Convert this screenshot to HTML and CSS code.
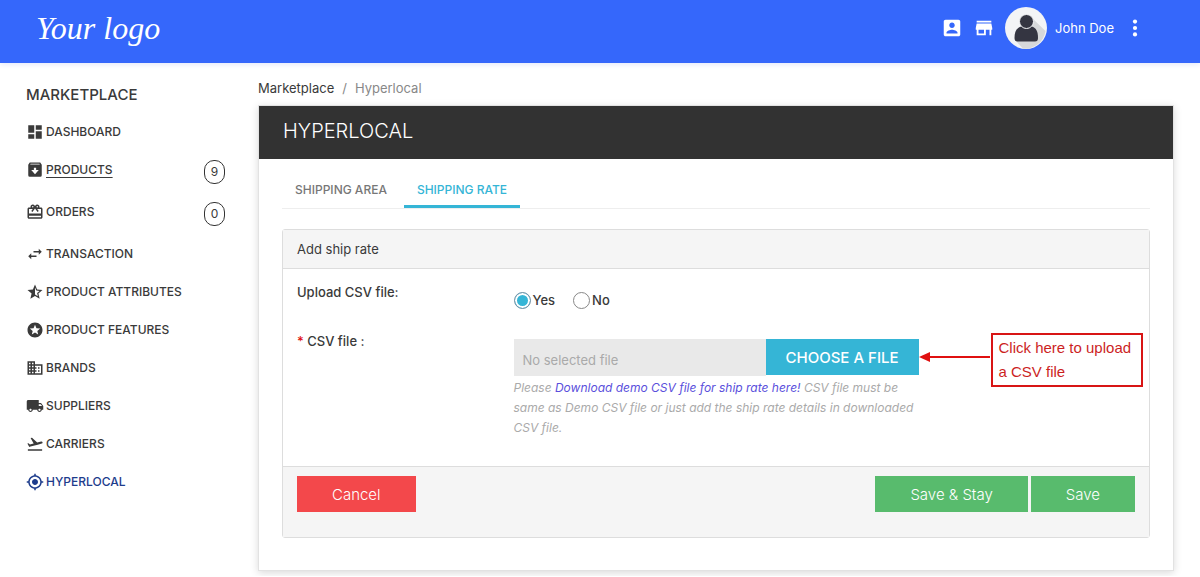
FILE: index.html
```html
<!DOCTYPE html>
<html lang="en">

<head>
  <meta charset="UTF-8">
  <meta name="viewport" content="width=device-width, initial-scale=1.0">
  <title>Hyperlocal - Marketplace</title>
  <link rel="stylesheet" href="styles.css">
</head>

<body>
  <header class="header">
    <a class="logo" href="#">Your logo</a>
    <nav class="header-nav">
      <a class="header-link" href="#" aria-label="Profile">
        <svg class="header-icon" viewBox="0 0 24 24"><path d="M3 5v14c0 1.100.89 2 2 2h14c1.100 0 2-.9 2-2V5c0-1.100-.9-2-2-2H5c-1.110 0-2 .9-2 2zm12 4c0 1.660-1.340 3-3 3s-3-1.340-3-3 1.340-3 3-3 3 1.340 3 3zm-9 8c0-2 4-3.100 6-3.100s6 1.100 6 3.100v1H6v-1z"/></svg>
      </a>
      <a class="header-link" href="#" aria-label="Shop">
        <svg class="header-icon" viewBox="0 0 24 24"><path d="M20 4H4v2h16V4zm1 10v-2l-1-5H4l-1 5v2h1v6h10v-6h4v6h2v-6h1zm-9 4H6v-4h6v4z"/></svg>
      </a>
      <a class="user" href="#">
        <svg class="avatar" viewBox="0 0 42 42">
          <circle cx="21" cy="21" r="21" fill="#f3f4f6"/>
          <path d="M26 10L40.500 24A21 21 0 0 1 18 41.700L10 33z" fill="#d6d8da"/>
          <path d="M9.500 31c0-6 2-10.500 7-11.500h10c5 1 6.500 5.500 6.500 11.500 0 2.500-1 3.500-3 3.500H12.500c-2 0-3-1-3-3.500z" fill="#343541"/>
          <circle cx="21.500" cy="14.500" r="7" fill="#343541" stroke="#f3f4f6"/>
        </svg>
        <span>John Doe</span>
      </a>
      <button class="menu-button" type="button" aria-label="More">
        <svg class="header-icon" viewBox="0 0 24 24"><circle cx="12" cy="5" r="2.300"/><circle cx="12" cy="12" r="2.300"/><circle cx="12" cy="19" r="2.300"/></svg>
      </button>
    </nav>
  </header>

  <div class="page">
    <aside class="sidebar">
      <h2 class="sidebar-title">MARKETPLACE</h2>
      <nav>
        <a class="menu-item" href="#">
          <svg class="icon" viewBox="0 0 24 24"><path d="M3 13h8V3H3v10zm0 8h8v-6H3v6zm10 0h8V11h-8v10zm0-18v6h8V3h-8z"/></svg>
          <span class="menu-text">DASHBOARD</span>
        </a>
        <a class="menu-item hovered" href="#">
          <svg class="icon" viewBox="0 0 24 24"><path fill-rule="evenodd" d="M5 2h14l2 3v14a2 2 0 0 1-2 2H5a2 2 0 0 1-2-2V5zM5.500 4.500h13l-.7-1H6.200zM10.500 9v3H7l5 5.500 5-5.500h-3.500V9z"/></svg>
          <span class="menu-text">PRODUCTS</span>
          <span class="badge">9</span>
        </a>
        <a class="menu-item" href="#">
          <svg class="icon" viewBox="0 0 24 24"><path d="M20 6h-2.180c.11-.31.18-.65.18-1 0-1.660-1.340-3-3-3-1.050 0-1.960.54-2.500 1.350l-.5.670-.5-.68C10.960 2.540 10.050 2 9 2 7.340 2 6 3.340 6 5c0 .35.070.69.180 1H4c-1.110 0-1.990.89-1.990 2L2 19c0 1.110.89 2 2 2h16c1.110 0 2-.89 2-2V8c0-1.110-.89-2-2-2zm-5-2c.55 0 1 .45 1 1s-.45 1-1 1-1-.45-1-1 .45-1 1-1zM9 4c.55 0 1 .45 1 1s-.45 1-1 1-1-.45-1-1 .45-1 1-1zm11 15H4v-2h16v2zm0-5H4V8h5.080L7 10.830 8.620 12 11 8.760l1-1.360 1 1.360L15.380 12 17 10.830 14.920 8H20v6z"/></svg>
          <span class="menu-text">ORDERS</span>
          <span class="badge">0</span>
        </a>
        <a class="menu-item" href="#">
          <svg class="icon" viewBox="0 0 24 24"><path d="M6.990 11L3 15l3.990 4v-3H14v-2H6.990v-3zM21 9l-3.990-4v3H10v2h7.010v3L21 9z"/></svg>
          <span class="menu-text">TRANSACTION</span>
        </a>
        <a class="menu-item" href="#">
          <svg class="icon" viewBox="0 0 24 24"><path d="M22 9.240l-7.190-.62L12 2 9.190 8.630 2 9.240l5.460 4.730L5.820 21 12 17.270 18.180 21l-1.630-7.030L22 9.240zM12 15.400V6.100l1.710 4.040 4.380.38-3.320 2.880 1 4.280L12 15.400z"/></svg>
          <span class="menu-text">PRODUCT ATTRIBUTES</span>
        </a>
        <a class="menu-item" href="#">
          <svg class="icon" viewBox="0 0 24 24"><path d="M11.990 2C6.470 2 2 6.480 2 12s4.470 10 9.990 10C17.520 22 22 17.520 22 12S17.520 2 11.990 2zm4.240 16L12 15.450 7.770 18l1.120-4.810-3.730-3.230 4.920-.42L12 5l1.920 4.530 4.920.42-3.730 3.230L16.230 18z"/></svg>
          <span class="menu-text">PRODUCT FEATURES</span>
        </a>
        <a class="menu-item" href="#">
          <svg class="icon" viewBox="0 0 24 24"><path d="M12 7V3H2v18h20V7H12zM6 19H4v-2h2v2zm0-4H4v-2h2v2zm0-4H4V9h2v2zm0-4H4V5h2v2zm4 12H8v-2h2v2zm0-4H8v-2h2v2zm0-4H8V9h2v2zm0-4H8V5h2v2zm10 12h-8v-2h2v-2h-2v-2h2v-2h-2V9h8v10zm-2-8h-2v2h2v-2zm0 4h-2v2h2v-2z"/></svg>
          <span class="menu-text">BRANDS</span>
        </a>
        <a class="menu-item" href="#">
          <svg class="icon" viewBox="0 0 24 24"><path d="M20 8h-3V4H3c-1.100 0-2 .9-2 2v11h2c0 1.660 1.340 3 3 3s3-1.340 3-3h6c0 1.660 1.340 3 3 3s3-1.340 3-3h2v-5l-3-4zM6 18.500c-.83 0-1.500-.67-1.500-1.500s.67-1.500 1.500-1.500 1.500.67 1.500 1.500-.67 1.500-1.500 1.500zm13.500-9l1.960 2.500H17V9.500h2.500zm-1.500 9c-.83 0-1.500-.67-1.500-1.500s.67-1.500 1.500-1.500 1.500.67 1.500 1.500-.67 1.500-1.500 1.500z"/></svg>
          <span class="menu-text">SUPPLIERS</span>
        </a>
        <a class="menu-item" href="#">
          <svg class="icon" viewBox="0 0 24 24"><path d="M2.500 19h19v2h-19zm19.570-9.360c-.21-.8-1.040-1.280-1.840-1.060L14.920 10l-6.900-6.430-1.930.51 4.140 7.170-4.970 1.330-1.970-1.540-1.450.39 1.820 3.160.77 1.330 1.600-.43 5.310-1.420 4.350-1.160L21 11.490c.81-.23 1.280-1.050 1.070-1.850z"/></svg>
          <span class="menu-text">CARRIERS</span>
        </a>
        <a class="menu-item active" href="#">
          <svg class="icon" viewBox="0 0 24 24"><path d="M12 8c-2.210 0-4 1.790-4 4s1.790 4 4 4 4-1.790 4-4-1.790-4-4-4zm8.940 3c-.46-4.170-3.770-7.480-7.940-7.940V1h-2v2.060C6.830 3.520 3.520 6.830 3.060 11H1v2h2.060c.46 4.170 3.770 7.480 7.940 7.940V23h2v-2.060c4.170-.46 7.480-3.770 7.940-7.940H23v-2h-2.060zM12 19c-3.870 0-7-3.130-7-7s3.130-7 7-7 7 3.130 7 7-3.130 7-7 7z"/></svg>
          <span class="menu-text">HYPERLOCAL</span>
        </a>
      </nav>
    </aside>

    <main class="content">
      <nav class="breadcrumb">
        <a href="#">Marketplace</a>
        <span>/</span>
        <span>Hyperlocal</span>
      </nav>

      <section class="card">
        <h1 class="card-title">HYPERLOCAL</h1>
        <div class="card-content">
          <nav class="tabs">
            <a class="tab" href="#">SHIPPING AREA</a>
            <a class="tab selected" href="#">SHIPPING RATE</a>
          </nav>

          <form class="panel">
            <h2 class="panel-title">Add ship rate</h2>
            <div class="panel-body">
              <div class="form-row" role="radiogroup" aria-labelledby="upload-label">
                <span class="form-label" id="upload-label">Upload CSV file:</span>
                <div class="field radios">
                  <label class="radio-label"><input class="radio" type="radio" name="upload" value="1" checked>Yes</label>
                  <label class="radio-label"><input class="radio" type="radio" name="upload" value="0">No</label>
                </div>
              </div>
              <div class="form-row">
                <label class="form-label" for="csv-file"><span class="required">*</span> CSV file :</label>
                <div class="field">
                  <div class="file-group">
                    <input class="file-name" type="text" id="csv-file" placeholder="No selected file" readonly>
                    <button class="file-button" type="button">CHOOSE A FILE</button>
                    <div class="callout">
                      <svg class="arrow" viewBox="0 0 72 12"><path d="M8 6h63" stroke="#e01010" stroke-width="2"/><path d="M0 6l11-5v10z" fill="#e01010"/></svg>
                      <p class="callout-text">Click here to upload a CSV file</p>
                    </div>
                  </div>
                  <p class="help">Please <a href="#">Download demo CSV file for ship rate here!</a> CSV file must be same as Demo CSV file or just add the ship rate details in downloaded CSV file.</p>
                </div>
              </div>
            </div>
            <div class="panel-footer">
              <button class="button cancel" type="button">Cancel</button>
              <div class="save-buttons">
                <button class="button save" type="submit">Save &amp; Stay</button>
                <button class="button save" type="submit">Save</button>
              </div>
            </div>
          </form>
        </div>
      </section>
    </main>
  </div>
</body>

</html>
```
FILE: styles.css
```css
* {
  box-sizing: border-box;
}

body {
  margin: 0;
  background: #fff;
  color: #3a3a3a;
  font-family: Inter, "Noto Sans", sans-serif;
  font-size: 13px;
  line-height: 20px;
}

a {
  color: inherit;
  text-decoration: none;
}

h1,
h2,
p {
  margin: 0;
}

button,
input {
  font-family: inherit;
}

/* Header */
.header {
  display: flex;
  align-items: center;
  justify-content: space-between;
  height: 63px;
  padding: 0 54px 8px 36px;
  background: #3567fb;
  color: #fff;
  box-shadow: 0 2px 5px #e6ebfb;
}

.logo {
  font-family: "Liberation Serif", serif;
  font-size: 32px;
  font-style: italic;
  line-height: 48px;
}

.header-nav {
  display: flex;
  align-items: center;
  gap: 10px;
}

.header-link,
.menu-button {
  display: flex;
}

.header-icon {
  width: 22px;
  height: 22px;
  fill: #fff;
}

.user {
  display: flex;
  align-items: center;
  gap: 8px;
}

.avatar {
  width: 42px;
  height: 42px;
}

.menu-button {
  padding: 0;
  border: none;
  background: none;
  cursor: pointer;
}

/* Layout */
.page {
  display: flex;
  padding: 0 26px 5px;
}

.sidebar {
  flex: 0 0 232px;
  padding: 21px 33px 0 0;
}

.content {
  flex: 1;
  min-width: 0;
  padding-top: 15px;
}

/* Sidebar */
.sidebar-title {
  margin-bottom: 7px;
  font-size: 15px;
  font-weight: 500;
  line-height: 22px;
}

.menu-item {
  display: flex;
  align-items: flex-start;
  gap: 2px;
  padding: 9px 0;
  font-size: 12px;
  font-weight: 500;
}

.icon {
  width: 18px;
  height: 18px;
  margin-top: 1px;
  fill: currentColor;
}

.hovered .menu-text {
  text-decoration: underline;
  text-underline-offset: 3px;
}

.active {
  color: #1d3c8c;
}

.badge {
  width: 21px;
  height: 24px;
  margin-left: auto;
  border: 1px solid #333;
  border-radius: 10px;
  font-weight: 400;
  line-height: 22px;
  text-align: center;
}

/* Main card */
.breadcrumb {
  display: flex;
  gap: 8px;
  margin-bottom: 7px;
  color: #888;
}

.breadcrumb a {
  color: #3a3a3a;
}

.card {
  border: 1px solid #e2e2e2;
  box-shadow: 0 2px 8px rgba(0, 0, 0, 0.15);
}

.card-title {
  padding: 9px 24px 12px;
  background: #323232;
  color: #fff;
  font-size: 20px;
  font-weight: 300;
  line-height: 32px;
}

.card-content {
  padding: 14px 23px 32px;
}

.tabs {
  display: flex;
  gap: 4px;
  margin-bottom: 20px;
  border-bottom: 1px solid #eee;
}

.tab {
  padding: 7px 13px 5px;
  border-bottom: 3px solid transparent;
  color: #777;
  font-size: 12px;
  font-weight: 500;
}

.tab.selected {
  border-color: #35b5d6;
  color: #35b5d6;
}

/* Form panel */
.panel {
  border: 1px solid #ddd;
  border-radius: 3px;
}

.panel-title {
  padding: 9px 14px;
  border-bottom: 1px solid #ddd;
  background: #f5f5f5;
  font-size: 13px;
  font-weight: 400;
}

.panel-body {
  padding: 13px 0 28px;
}

.form-row {
  display: grid;
  grid-template-columns: 25% 50%;
}

.form-row + .form-row {
  margin-top: 21px;
}

.form-label {
  padding: 0 14px;
  font-weight: 500;
}

.required {
  color: #e01010;
}

.field {
  padding: 0 14px;
}

.radios {
  display: flex;
  gap: 18px;
  padding-top: 8px;
}

.radio-label {
  display: flex;
  align-items: center;
  gap: 2px;
  font-weight: 500;
}

.radio {
  width: 17px;
  height: 17px;
  margin: 0;
  border: 1px solid #888;
  border-radius: 50%;
  background: #fff;
  appearance: none;
}

.radio:checked {
  border-color: #7b93a5;
  background: #35b5d6;
  box-shadow: inset 0 0 0 2px #fff;
}

.file-group {
  display: flex;
  position: relative;
  margin-top: 8px;
}

.file-name {
  flex: 1;
  min-width: 0;
  height: 37px;
  padding: 4px 9px 0;
  border: none;
  background: #e9e9e9;
  font-size: 13px;
}

.file-name::placeholder {
  color: #aaa;
}

.file-button {
  height: 36px;
  padding: 0 20px;
  border: none;
  background: #35b5d6;
  color: #fff;
  font-size: 15px;
  font-weight: 500;
  cursor: pointer;
}

/* Red note beside the file button */
.callout {
  display: flex;
  position: absolute;
  top: -6px;
  left: 100%;
}

.arrow {
  width: 72px;
  height: 12px;
  margin-top: 18px;
}

.callout-text {
  width: 152px;
  padding: 1px 6px;
  border: 2px solid #d81515;
  background: #fff;
  color: #cc1f1f;
  font-family: "Liberation Sans", Arial, sans-serif;
  font-size: 15px;
  line-height: 24px;
}

.help {
  padding-top: 2px;
  color: #aaa;
  font-size: 12px;
  font-style: italic;
}

.help a {
  color: #5a4fdc;
}

.panel-footer {
  display: flex;
  justify-content: space-between;
  padding: 9px 14px 25px;
  border-top: 1px solid #ddd;
  background: #f5f5f5;
}

.save-buttons {
  display: flex;
  gap: 3px;
}

.button {
  height: 36px;
  padding: 0 35px;
  border: none;
  color: #fff;
  font-size: 15px;
  font-weight: 300;
  cursor: pointer;
}

.cancel {
  background: #f3484b;
}

.save {
  background: #58bb6d;
}
```
